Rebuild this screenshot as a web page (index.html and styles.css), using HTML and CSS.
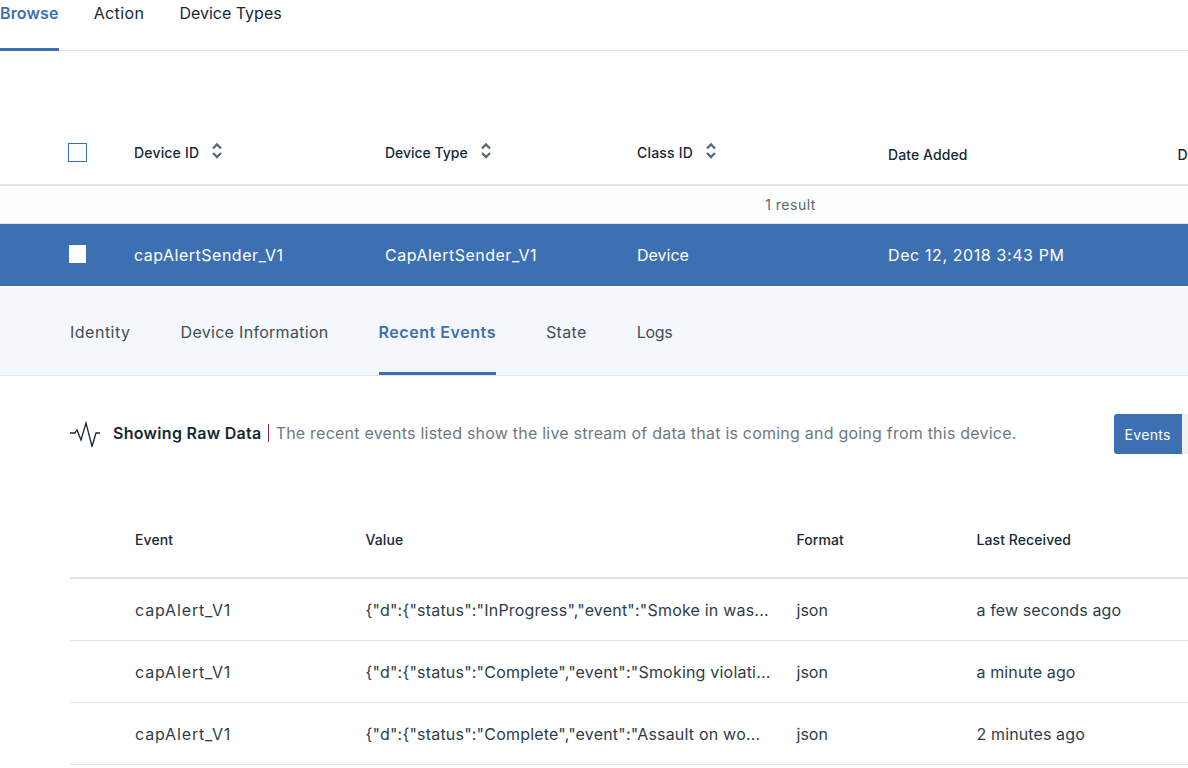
FILE: index.html
```html
<!DOCTYPE html>
<html lang="en">
<head>
<meta charset="utf-8">
<title>Devices</title>
<link rel="stylesheet" href="styles.css">
</head>
<body>
<nav class="tabs">
  <a class="tab tab-active">Browse</a>
  <a class="tab tab-action">Action</a>
  <a class="tab tab-types">Device Types</a>
</nav>
<section class="device-head">
  <div class="check-cell"><span class="checkbox"></span></div>
  <div class="th th-wide">Device ID <svg class="sort" viewBox="0 0 12 18"><path d="M2 6.500 6 2.500 10 6.500M2 11 6 15 10 11"/></svg></div>
  <div class="th th-tight">Device Type <svg class="sort" viewBox="0 0 12 18"><path d="M2 6.500 6 2.500 10 6.500M2 11 6 15 10 11"/></svg></div>
  <div class="th th-wide">Class ID <svg class="sort" viewBox="0 0 12 18"><path d="M2 6.500 6 2.500 10 6.500M2 11 6 15 10 11"/></svg></div>
  <div class="th th-low">Date Added</div>
  <div class="th th-low">De</div>
</section>
<div class="results">1 result</div>
<section class="device-row">
  <div class="check-cell"><span class="checkbox-white"></span></div>
  <div class="cell-id">capAlertSender_V1</div>
  <div class="cell-id">CapAlertSender_V1</div>
  <div>Device</div>
  <div class="cell-date">Dec 12, 2018 3:43 PM</div>
</section>
<nav class="subtabs">
  <a class="subtab subtab-identity">Identity</a>
  <a class="subtab subtab-info">Device Information</a>
  <a class="subtab subtab-active">Recent Events</a>
  <a class="subtab">State</a>
  <a class="subtab subtab-logs">Logs</a>
</nav>
<section class="raw">
  <svg class="pulse" viewBox="0 0 30 28"><path d="M0 14H5L7 11 11 21 16 4 22 27.500 26 14H30"/></svg>
  <strong class="raw-title">Showing Raw Data</strong>
  <span class="raw-sep"></span>
  <span class="raw-text">The recent events listed show the live stream of data that is coming and going from this device.</span>
  <div class="toggle"><span class="toggle-on">Events</span><span class="toggle-off"></span></div>
</section>
<section class="events">
  <div class="ev ev-head"><div>Event</div><div>Value</div><div>Format</div><div>Last Received</div></div>
  <div class="ev"><div class="ev-name">capAlert_V1</div><div class="ev-value">{"d":{"status":"InProgress","event":"Smoke in was...</div><div>json</div><div class="ev-time">a few seconds ago</div></div>
  <div class="ev"><div class="ev-name">capAlert_V1</div><div class="ev-value">{"d":{"status":"Complete","event":"Smoking violati...</div><div>json</div><div class="ev-time">a minute ago</div></div>
  <div class="ev"><div class="ev-name">capAlert_V1</div><div class="ev-value">{"d":{"status":"Complete","event":"Assault on wo...</div><div>json</div><div class="ev-time">2 minutes ago</div></div>
</section>
</body>
</html>
```
FILE: styles.css
```css
* { box-sizing: border-box; }
html, body { margin: 0; height: 768px; overflow: hidden; background: #fff; }
body { width: 1188px; font-family: "Inter", "Noto Sans", sans-serif; color: #152935; font-size: 16px; }

.tabs { display: flex; gap: 35px; height: 51px; border-bottom: 1px solid #dfe6eb; }
.tab { height: 51px; padding-top: 2px; line-height: 22px; color: #152935; letter-spacing: .15px; }
.tab-action { letter-spacing: .4px; }
.tab-types { letter-spacing: 0; }
.tab-active { color: #3d70b2; font-weight: 600; border-bottom: 3px solid #3d70b2; }

.device-head, .device-row { display: grid; grid-template-columns: 134px 251px 252px 251px 289.500px 200px; white-space: nowrap; overflow: hidden; }
.check-cell { padding-left: 68px; display: flex; align-items: center; }
.device-head { height: 135px; border-bottom: 2px solid #dfe6eb; padding-top: 92px; }
.device-head > div { height: 19px; display: flex; align-items: center; }
.th { font-size: 14px; font-weight: 500; gap: 12px; letter-spacing: .08px; }
.th-wide { letter-spacing: .18px; }
.th-tight { letter-spacing: -.02px; }
.th-low { position: relative; top: 2px; }
.checkbox { width: 19px; height: 19px; border: 1px solid #3d70b2; }
.sort { width: 12px; height: 18px; position: relative; top: -2px; fill: none; stroke: #5a6872; stroke-width: 2.300; }

.results { height: 38px; background: #fbfcfc; border-bottom: 1px solid #dfe6eb; display: flex; align-items: center; justify-content: center; padding-left: 393px; font-size: 14px; color: #5a6872; letter-spacing: .5px; }

.device-row { height: 62px; background: #3d70b2; color: #fff; align-items: center; }
.cell-id { letter-spacing: .5px; }
.cell-date { letter-spacing: .6px; }
.checkbox-white { width: 17px; height: 18px; margin: 0 0 2px 1px; background: #fff; }

.subtabs { display: flex; gap: 50px; height: 89px; margin-top: 1px; padding-left: 70px; background: #f4f7fb; border-bottom: 1px solid #dfe6eb; }
.subtab { height: 88px; line-height: 90px; color: #3d4f5a; letter-spacing: .35px; }
.subtab-identity { letter-spacing: .5px; }
.subtab-info { letter-spacing: .3px; }
.subtab-logs { letter-spacing: -.3px; }
.subtab-active { color: #3d70b2; font-weight: 600; border-bottom: 3px solid #3d70b2; letter-spacing: .55px; }

.raw { display: flex; align-items: center; height: 117px; padding: 0 0 3px 70px; white-space: nowrap; overflow: hidden; }
.pulse { width: 30px; height: 28px; fill: none; stroke: #152935; stroke-width: 1.300; margin-right: 13px; flex: none; }
.raw-title { font-weight: 600; flex: none; letter-spacing: .3px; }
.raw-sep { width: 1px; height: 18px; background: #9b1f4f; margin: 0 7px 0 6px; flex: none; }
.raw-text { color: #6d7a82; width: 838px; flex: none; letter-spacing: .22px; }
.toggle { display: flex; height: 40px; flex: none; border-radius: 3px; overflow: hidden; margin-top: 2px; }
.toggle-on { width: 68px; background: #3d70b2; color: #fff; font-size: 14px; letter-spacing: .3px; display: flex; align-items: center; justify-content: center; }
.toggle-off { width: 40px; background: #f0f0f0; }

.events { margin-left: 70px; }
.ev { display: grid; grid-template-columns: 230.500px 431px 180px 1fr; height: 62px; align-items: center; padding-left: 65px; border-bottom: 1px solid #dfe6eb; white-space: nowrap; color: #2c3e4a; }
.ev-name { letter-spacing: .85px; }
.ev-value { letter-spacing: .2px; }
.ev-time { letter-spacing: .12px; }
.ev-head { height: 87px; padding-top: 10px; border-bottom: 2px solid #dfe6eb; font-size: 14px; font-weight: 500; color: #152935; margin-top: -1px; letter-spacing: .08px; }
```
